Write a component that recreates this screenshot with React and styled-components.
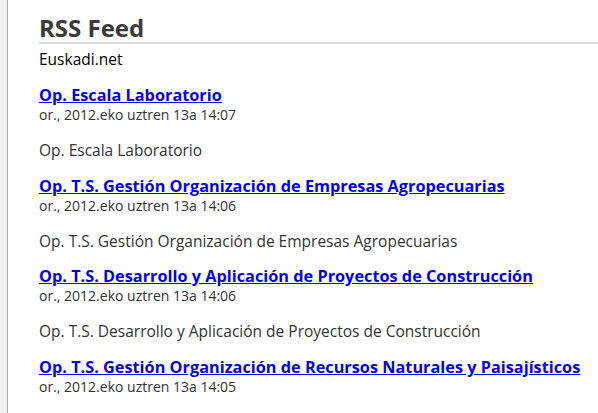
import styled, { createGlobalStyle } from "styled-components";

const items = [
  {
    title: "Op. Escala Laboratorio",
    date: "or., 2012.eko uztren 13a 14:07",
  },
  {
    title: "Op. T.S. Gestión Organización de Empresas Agropecuarias",
    date: "or., 2012.eko uztren 13a 14:06",
  },
  {
    title: "Op. T.S. Desarrollo y Aplicación de Proyectos de Construcción",
    date: "or., 2012.eko uztren 13a 14:06",
  },
  {
    title: "Op. T.S. Gestión Organización de Recursos Naturales y Paisajísticos",
    date: "or., 2012.eko uztren 13a 14:05",
  },
];

export default function App() {
  return (
    <>
      <GlobalStyle />
      <Page>
        <Sidebar />
        <Main>
          <Title>RSS Feed</Title>
          <Source>Euskadi.net</Source>
          {items.map((item) => (
            <Item key={item.title}>
              <ItemLink href="#">{item.title}</ItemLink>
              <ItemDate>{item.date}</ItemDate>
              <ItemText>{item.title}</ItemText>
            </Item>
          ))}
        </Main>
      </Page>
    </>
  );
}

const GlobalStyle = createGlobalStyle`
  html, body {
    margin: 0;
    padding: 0;
    background: #ffffff;
  }
  body {
    font-family: "Open Sans", "DejaVu Sans", sans-serif;
    overflow: hidden;
  }
`;

const Page = styled.div`
  display: flex;
  min-height: 413px;
`;

const Sidebar = styled.div`
  width: 7px;
  flex: none;
  background: #f0f0f0;
  border-right: 1px solid #a9a9a9;
`;

const Main = styled.div`
  flex: 1;
  min-width: 0;
  padding: 14px 0 0 31px;
`;

const Title = styled.h1`
  margin: 0;
  font-size: 24px;
  font-weight: 700;
  line-height: 28px;
  color: #3a3a3a;
  border-bottom: 2px solid #dcdcdc;
`;

const Source = styled.div`
  margin-top: 5px;
  font-size: 15.5px;
  line-height: 20px;
  color: #000000;
`;

const Item = styled.div`
  display: flex;
  flex-direction: column;
  margin-top: 15.8px;
`;

const ItemLink = styled.a`
  font-size: 16.3px;
  font-weight: 700;
  line-height: 20px;
  color: #0000ee;
  text-decoration: underline;
  align-self: flex-start;
  white-space: nowrap;
`;

const ItemDate = styled.div`
  font-size: 14px;
  line-height: 19px;
  color: #333333;
`;

const ItemText = styled.p`
  margin: 16px 0 0;
  font-size: 15.5px;
  line-height: 20px;
  color: #333333;
  white-space: nowrap;
`;
